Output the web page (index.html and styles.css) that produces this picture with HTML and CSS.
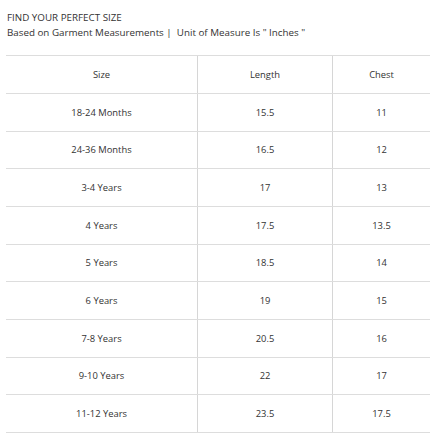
FILE: index.html
```html
<!DOCTYPE html>
<html>
<head>
<meta charset="utf-8">
<link rel="stylesheet" href="styles.css">
</head>
<body>
<div class="page">
  <div class="title">FIND YOUR PERFECT SIZE</div>
  <div class="subtitle">Based on Garment Measurements |&nbsp; Unit of Measure Is " Inches "</div>
  <table class="chart">
    <thead>
      <tr><th class="c1">Size</th><th class="c2">Length</th><th class="c3">Chest</th></tr>
    </thead>
    <tbody>
      <tr><td>18-24 Months</td><td>15.5</td><td>11</td></tr>
      <tr><td>24-36 Months</td><td>16.5</td><td>12</td></tr>
      <tr><td>3-4 Years</td><td>17</td><td>13</td></tr>
      <tr><td>4 Years</td><td>17.5</td><td>13.5</td></tr>
      <tr><td>5 Years</td><td>18.5</td><td>14</td></tr>
      <tr><td>6 Years</td><td>19</td><td>15</td></tr>
      <tr><td>7-8 Years</td><td>20.5</td><td>16</td></tr>
      <tr><td>9-10 Years</td><td>22</td><td>17</td></tr>
      <tr><td>11-12 Years</td><td>23.5</td><td>17.5</td></tr>
    </tbody>
  </table>
</div>
</body>
</html>
```
FILE: styles.css
```css
html, body {
  margin: 0;
  padding: 0;
  background: #fff;
}
.page {
  padding: 10px 8px 0 6px;
  font-family: "Open Sans", "Liberation Sans", sans-serif;
  color: #333;
}
.title {
  font-size: 9.8px;
  line-height: 15px;
  margin-left: 1px;
}
.subtitle {
  font-size: 9.8px;
  line-height: 15px;
  margin-left: 1px;
}
.chart {
  margin-top: 15px;
  width: 422px;
  border-collapse: collapse;
  table-layout: fixed;
  font-size: 9.4px;
}
.chart th, .chart td {
  font-weight: normal;
  text-align: center;
  height: 36.67px;
  padding: 0;
  border-top: 1px solid #ddd;
  border-bottom: 1px solid #ddd;
  color: #333;
}
.chart th {
  height: 37px;
}
.chart th + th, .chart td + td {
  border-left: 1px solid #d6d6d6;
}
.c1 { width: 191px; }
.c2 { width: 134px; }
.c3 { width: 97px; }
```
